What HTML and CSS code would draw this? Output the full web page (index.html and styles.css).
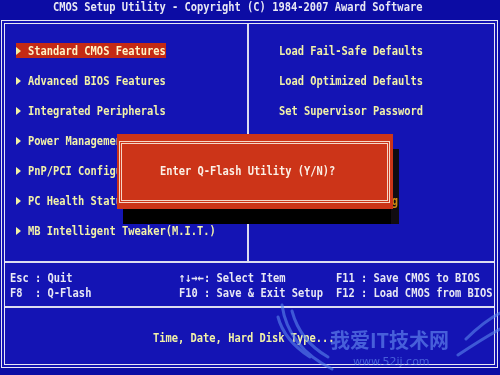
FILE: index.html
```html
<!DOCTYPE html>
<html>
<head>
<meta charset="utf-8">
<link rel="stylesheet" href="styles.css">
</head>
<body>
<div class="screen">
  <div class="title"><span class="t">CMOS Setup Utility - Copyright (C) 1984-2007 Award Software</span></div>
  <div class="frame">
    <div class="menu">
      <div class="col col-left">
        <div class="item sel"><i class="arrow"></i><span class="t">Standard CMOS Features</span></div>
        <div class="item"><i class="arrow"></i><span class="t">Advanced BIOS Features</span></div>
        <div class="item"><i class="arrow"></i><span class="t">Integrated Peripherals</span></div>
        <div class="item"><i class="arrow"></i><span class="t">Power Management Setup</span></div>
        <div class="item"><i class="arrow"></i><span class="t">PnP/PCI Configurations</span></div>
        <div class="item"><i class="arrow"></i><span class="t">PC Health Status</span></div>
        <div class="item"><i class="arrow"></i><span class="t">MB Intelligent Tweaker(M.I.T.)</span></div>
      </div>
      <div class="col col-right">
        <div class="item"><span class="t">Load Fail-Safe Defaults</span></div>
        <div class="item"><span class="t">Load Optimized Defaults</span></div>
        <div class="item"><span class="t">Set Supervisor Password</span></div>
        <div class="item"><span class="t">Set User Password</span></div>
        <div class="item"><span class="t">Save &amp; Exit Setup</span></div>
        <div class="item"><span class="t">Exit Without Saving</span></div>
      </div>
    </div>
    <div class="keys">
      <span class="t">Esc : Quit</span>
      <span class="t">↑↓→←: Select Item</span>
      <span class="t">F11 : Save CMOS to BIOS</span>
      <span class="t">F8  : Q-Flash</span>
      <span class="t">F10 : Save &amp; Exit Setup</span>
      <span class="t">F12 : Load CMOS from BIOS</span>
    </div>
    <div class="status"><span class="t">Time, Date, Hard Disk Type...</span></div>
  </div>

  <div class="shadow"></div>
  <div class="dialog">
    <div class="dialog-inner"><span class="t">Enter Q-Flash Utility (Y/N)?</span></div>
  </div>

  <div class="watermark">
    <svg class="wings" width="230" height="80" viewBox="0 0 230 80">
      <path d="M12 10 Q18 52 62 74" />
      <path d="M22 16 Q30 46 58 62" />
      <path d="M8 22 Q14 45 40 62" />
      <path d="M196 44 Q214 26 230 18" />
      <path d="M188 60 Q212 44 230 34" />
    </svg>
    <div class="wm-cn">我爱IT技术网</div>
    <div class="wm-url">www.52ij.com</div>
  </div>
</div>
</body>
</html>
```
FILE: styles.css
```css
* { box-sizing: border-box; }
html, body { margin: 0; padding: 0; }
body {
  width: 500px;
  height: 375px;
  overflow: hidden;
  background: #0c0ca4;
  font-family: "DejaVu Sans Mono", "Liberation Mono", monospace;
  font-weight: bold;
  font-size: 13px;
  line-height: 15px;
}
.screen { position: relative; width: 500px; height: 375px; }
.t {
  display: inline-block;
  white-space: pre;
  transform: scaleX(0.8);
  transform-origin: 0 50%;
}
.title {
  height: 20px;
  padding-left: 53px;
  line-height: 13px;
  color: #e8e8f4;
}
.frame {
  margin-left: 1px;
  width: 497px;
  height: 348px;
  border: 4px double #e8e8f4;
  background: #1414b4;
  display: flex;
  flex-direction: column;
}
.menu {
  height: 239px;
  flex: none;
  display: flex;
  border-bottom: 2px solid #dcdcf0;
}
.col { padding-top: 19px; }
.col-left {
  width: 244px;
  padding-left: 11px;
  border-right: 2px solid #dcdcf0;
}
.col-right { flex: 1; padding-left: 30px; }
.item {
  height: 15px;
  margin-bottom: 15px;
  display: flex;
  align-items: center;
  color: #f2f2a8;
}
.col-left .item { width: 150px; }
.item.sel { background: #c42a14; color: #fff4c4; }
.arrow { width: 12px; flex: none; display: flex; align-items: center; }
.arrow::before {
  content: "";
  width: 0;
  height: 0;
  border-left: 5px solid #f2f2a4;
  border-top: 4px solid transparent;
  border-bottom: 4px solid transparent;
}
.keys {
  height: 45px;
  flex: none;
  padding: 7px 0 0 5px;
  border-bottom: 2px solid #dcdcf0;
  display: grid;
  grid-template-columns: 169px 157px 1fr;
  grid-auto-rows: 15px;
  color: #e8e8f4;
}
.status {
  flex: 1;
  padding: 22px 0 0 148px;
  color: #f2f2a8;
}
.shadow {
  position: absolute;
  left: 123px;
  top: 149px;
  width: 276px;
  height: 75px;
  background: linear-gradient(90deg, #000 0 268px, #d89018 268px);
  mix-blend-mode: multiply;
}
.dialog {
  position: absolute;
  left: 117px;
  top: 134px;
  width: 276px;
  height: 75px;
  background: #cc3418;
  padding: 7px 3px 6px 2px;
}
.dialog-inner {
  height: 100%;
  border: 3px double #f6d6c6;
  padding: 19px 0 0 38px;
  color: #fbf0e6;
}
.watermark {
  position: absolute;
  left: 270px;
  top: 295px;
  width: 230px;
  height: 80px;
  opacity: 0.6;
}
.wings { position: absolute; left: 0; top: 0; }
.wings path { fill: none; stroke: #5a86ee; stroke-width: 3; stroke-linecap: round; }
.wm-cn {
  position: absolute;
  left: 60px;
  top: 33px;
  font-family: "Noto Sans CJK SC", sans-serif;
  font-weight: bold;
  font-size: 20px;
  line-height: 24px;
  color: #6a92f4;
  white-space: nowrap;
}
.wm-url {
  position: absolute;
  left: 83px;
  top: 60px;
  font-family: "DejaVu Sans", sans-serif;
  font-weight: normal;
  font-size: 11px;
  line-height: 14px;
  color: #6a92f4;
}
```
